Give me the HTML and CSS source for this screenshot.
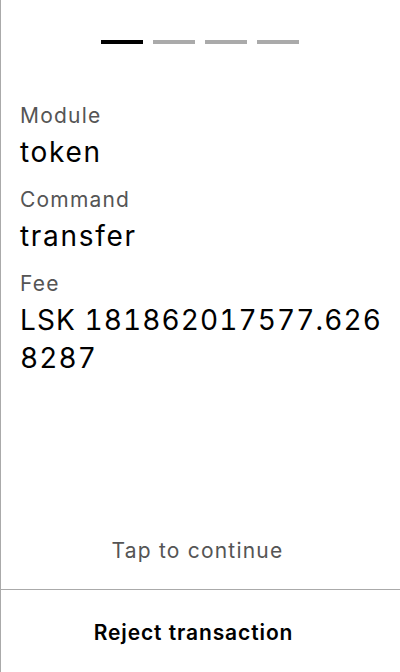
FILE: index.html
```html
<!DOCTYPE html>
<html>
<head>
<meta charset="utf-8">
<link rel="stylesheet" href="styles.css">
</head>
<body>
<div class="screen">
  <div class="steps">
    <span class="step active"></span>
    <span class="step"></span>
    <span class="step"></span>
    <span class="step"></span>
  </div>
  <div class="details">
    <div class="label">Module</div>
    <div class="value">token</div>
    <div class="label">Command</div>
    <div class="value">transfer</div>
    <div class="label">Fee</div>
    <div class="value amount">LSK 181862017577.6268287</div>
  </div>
  <div class="tap">Tap to continue</div>
  <div class="reject">Reject transaction</div>
</div>
</body>
</html>
```

FILE: styles.css
```css
html, body {
  margin: 0;
  padding: 0;
  background: #fff;
}
.screen {
  box-sizing: border-box;
  width: 400px;
  height: 672px;
  border-left: 1px solid #aaa;
  display: flex;
  flex-direction: column;
  font-family: Inter, "Noto Sans", sans-serif;
  color: #000;
}
.steps {
  display: flex;
  justify-content: center;
  gap: 10px;
  padding-top: 40px;
  padding-right: 2px;
}
.step {
  width: 42px;
  height: 4px;
  background: #aaa;
}
.step.active {
  background: #000;
}
.details {
  padding: 59px 16px 0 19px;
  display: flex;
  flex-direction: column;
}
.label {
  font-size: 21px;
  line-height: 26px;
  letter-spacing: 1.2px;
  color: #555;
  margin-bottom: 4px;
}
.value {
  font-size: 28px;
  line-height: 38px;
  letter-spacing: 1.7px;
  margin-bottom: 16px;
  word-break: break-all;
}
.value.amount {
  font-variant-numeric: tabular-nums;
  letter-spacing: 1.1px;
}
.tap {
  margin-top: auto;
  text-align: center;
  font-size: 21px;
  line-height: 26px;
  letter-spacing: 1.2px;
  color: #555;
  padding-bottom: 25px;
  padding-right: 6px;
}
.reject {
  border-top: 1px solid #aaa;
  height: 83px;
  box-sizing: border-box;
  padding-top: 3px;
  display: flex;
  align-items: center;
  justify-content: center;
  font-size: 21px;
  font-weight: 600;
  letter-spacing: 0.9px;
  padding-right: 14px;
}
```
